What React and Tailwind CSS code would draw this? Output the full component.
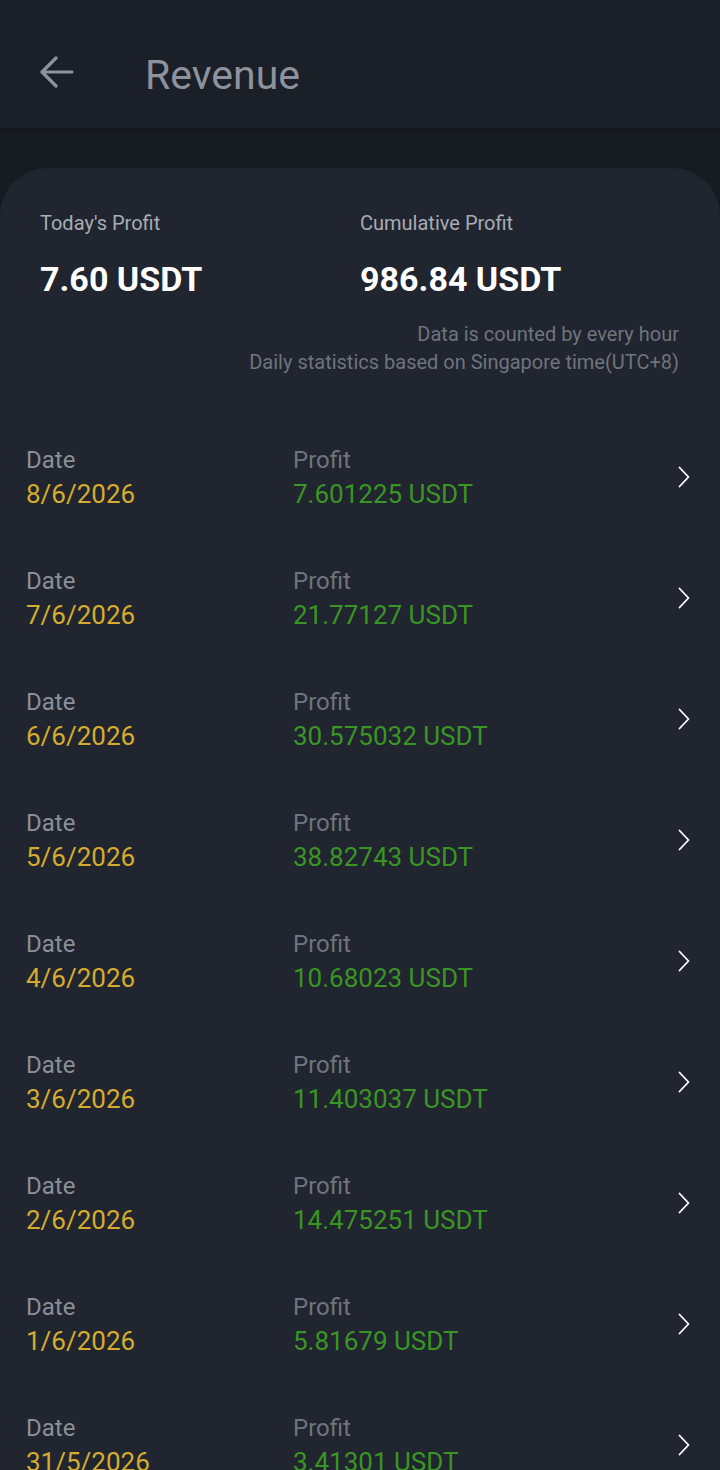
import React from 'react';

const rows = [
  { date: '8/6/2026', profit: '7.601225' },
  { date: '7/6/2026', profit: '21.77127' },
  { date: '6/6/2026', profit: '30.575032' },
  { date: '5/6/2026', profit: '38.82743' },
  { date: '4/6/2026', profit: '10.68023' },
  { date: '3/6/2026', profit: '11.403037' },
  { date: '2/6/2026', profit: '14.475251' },
  { date: '1/6/2026', profit: '5.81679' },
  { date: '31/5/2026', profit: '3.41301' },
];

const Chevron = () => (
  <svg width="12" height="22" viewBox="0 0 12 22" fill="none">
    <path d="M1.5 1.5 L10.5 11 L1.5 20.5" stroke="#ffffff" strokeWidth="1.8" strokeLinecap="round" strokeLinejoin="round" />
  </svg>
);

const App = () => {
  return (
    <div className="min-h-[1470px] h-[1470px] overflow-hidden bg-[#171b22] font-['Roboto','Liberation_Sans',sans-serif]">
      {/* Header */}
      <div className="h-[128px] bg-[#1b1f27] flex items-center pt-[16px] pl-[40px] shadow-[0_2px_6px_rgba(0,0,0,0.25)]">
        <svg width="34" height="34" viewBox="0 0 34 34" fill="none">
          <path d="M32 17 H3 M16 3 L2 17 L16 31" stroke="#8d929e" strokeWidth="3.2" strokeLinecap="round" strokeLinejoin="round" />
        </svg>
        <h1 className="ml-[71px] text-[41px] leading-[48px] text-[#8d929e] mt-[6px]">Revenue</h1>
      </div>

      {/* Card */}
      <div className="mt-[40px] bg-[#20252f] rounded-t-[48px] min-h-[1302px]">
        <div className="grid grid-cols-2 px-[40px] pt-[41px]">
          <div>
            <div className="text-[20px] leading-[28px] text-[#a8acb4]">Today's Profit</div>
            <div className="mt-[22px] text-[34px] leading-[40px] font-bold text-white">7.60 USDT</div>
          </div>
          <div>
            <div className="text-[20px] leading-[28px] text-[#a8acb4]">Cumulative Profit</div>
            <div className="mt-[22px] text-[34px] leading-[40px] font-bold text-white">986.84 USDT</div>
          </div>
        </div>
        <div className="mt-[21px] pr-[41px] text-right text-[20px] leading-[28px] text-[#6f747d]">
          <div>Data is counted by every hour</div>
          <div>Daily statistics based on Singapore time(UTC+8)</div>
        </div>

        {/* List */}
        <div className="mt-[40px]">
          {rows.map((r) => (
            <div key={r.date} className="flex items-center pl-[26px] pr-[30px] pt-[27px] pb-[26px]">
              <div className="w-[267px]">
                <div className="text-[24px] leading-[34px] text-[#8a8f99]">Date</div>
                <div className="text-[26px] leading-[34px] text-[#d6ac2e]">{r.date}</div>
              </div>
              <div className="flex-1">
                <div className="text-[24px] leading-[34px] text-[#6f747d]">Profit</div>
                <div className="text-[26px] leading-[34px] text-[#3a9524]">{r.profit} USDT</div>
              </div>
              <Chevron />
            </div>
          ))}
        </div>
      </div>
    </div>
  );
};

export default App;
